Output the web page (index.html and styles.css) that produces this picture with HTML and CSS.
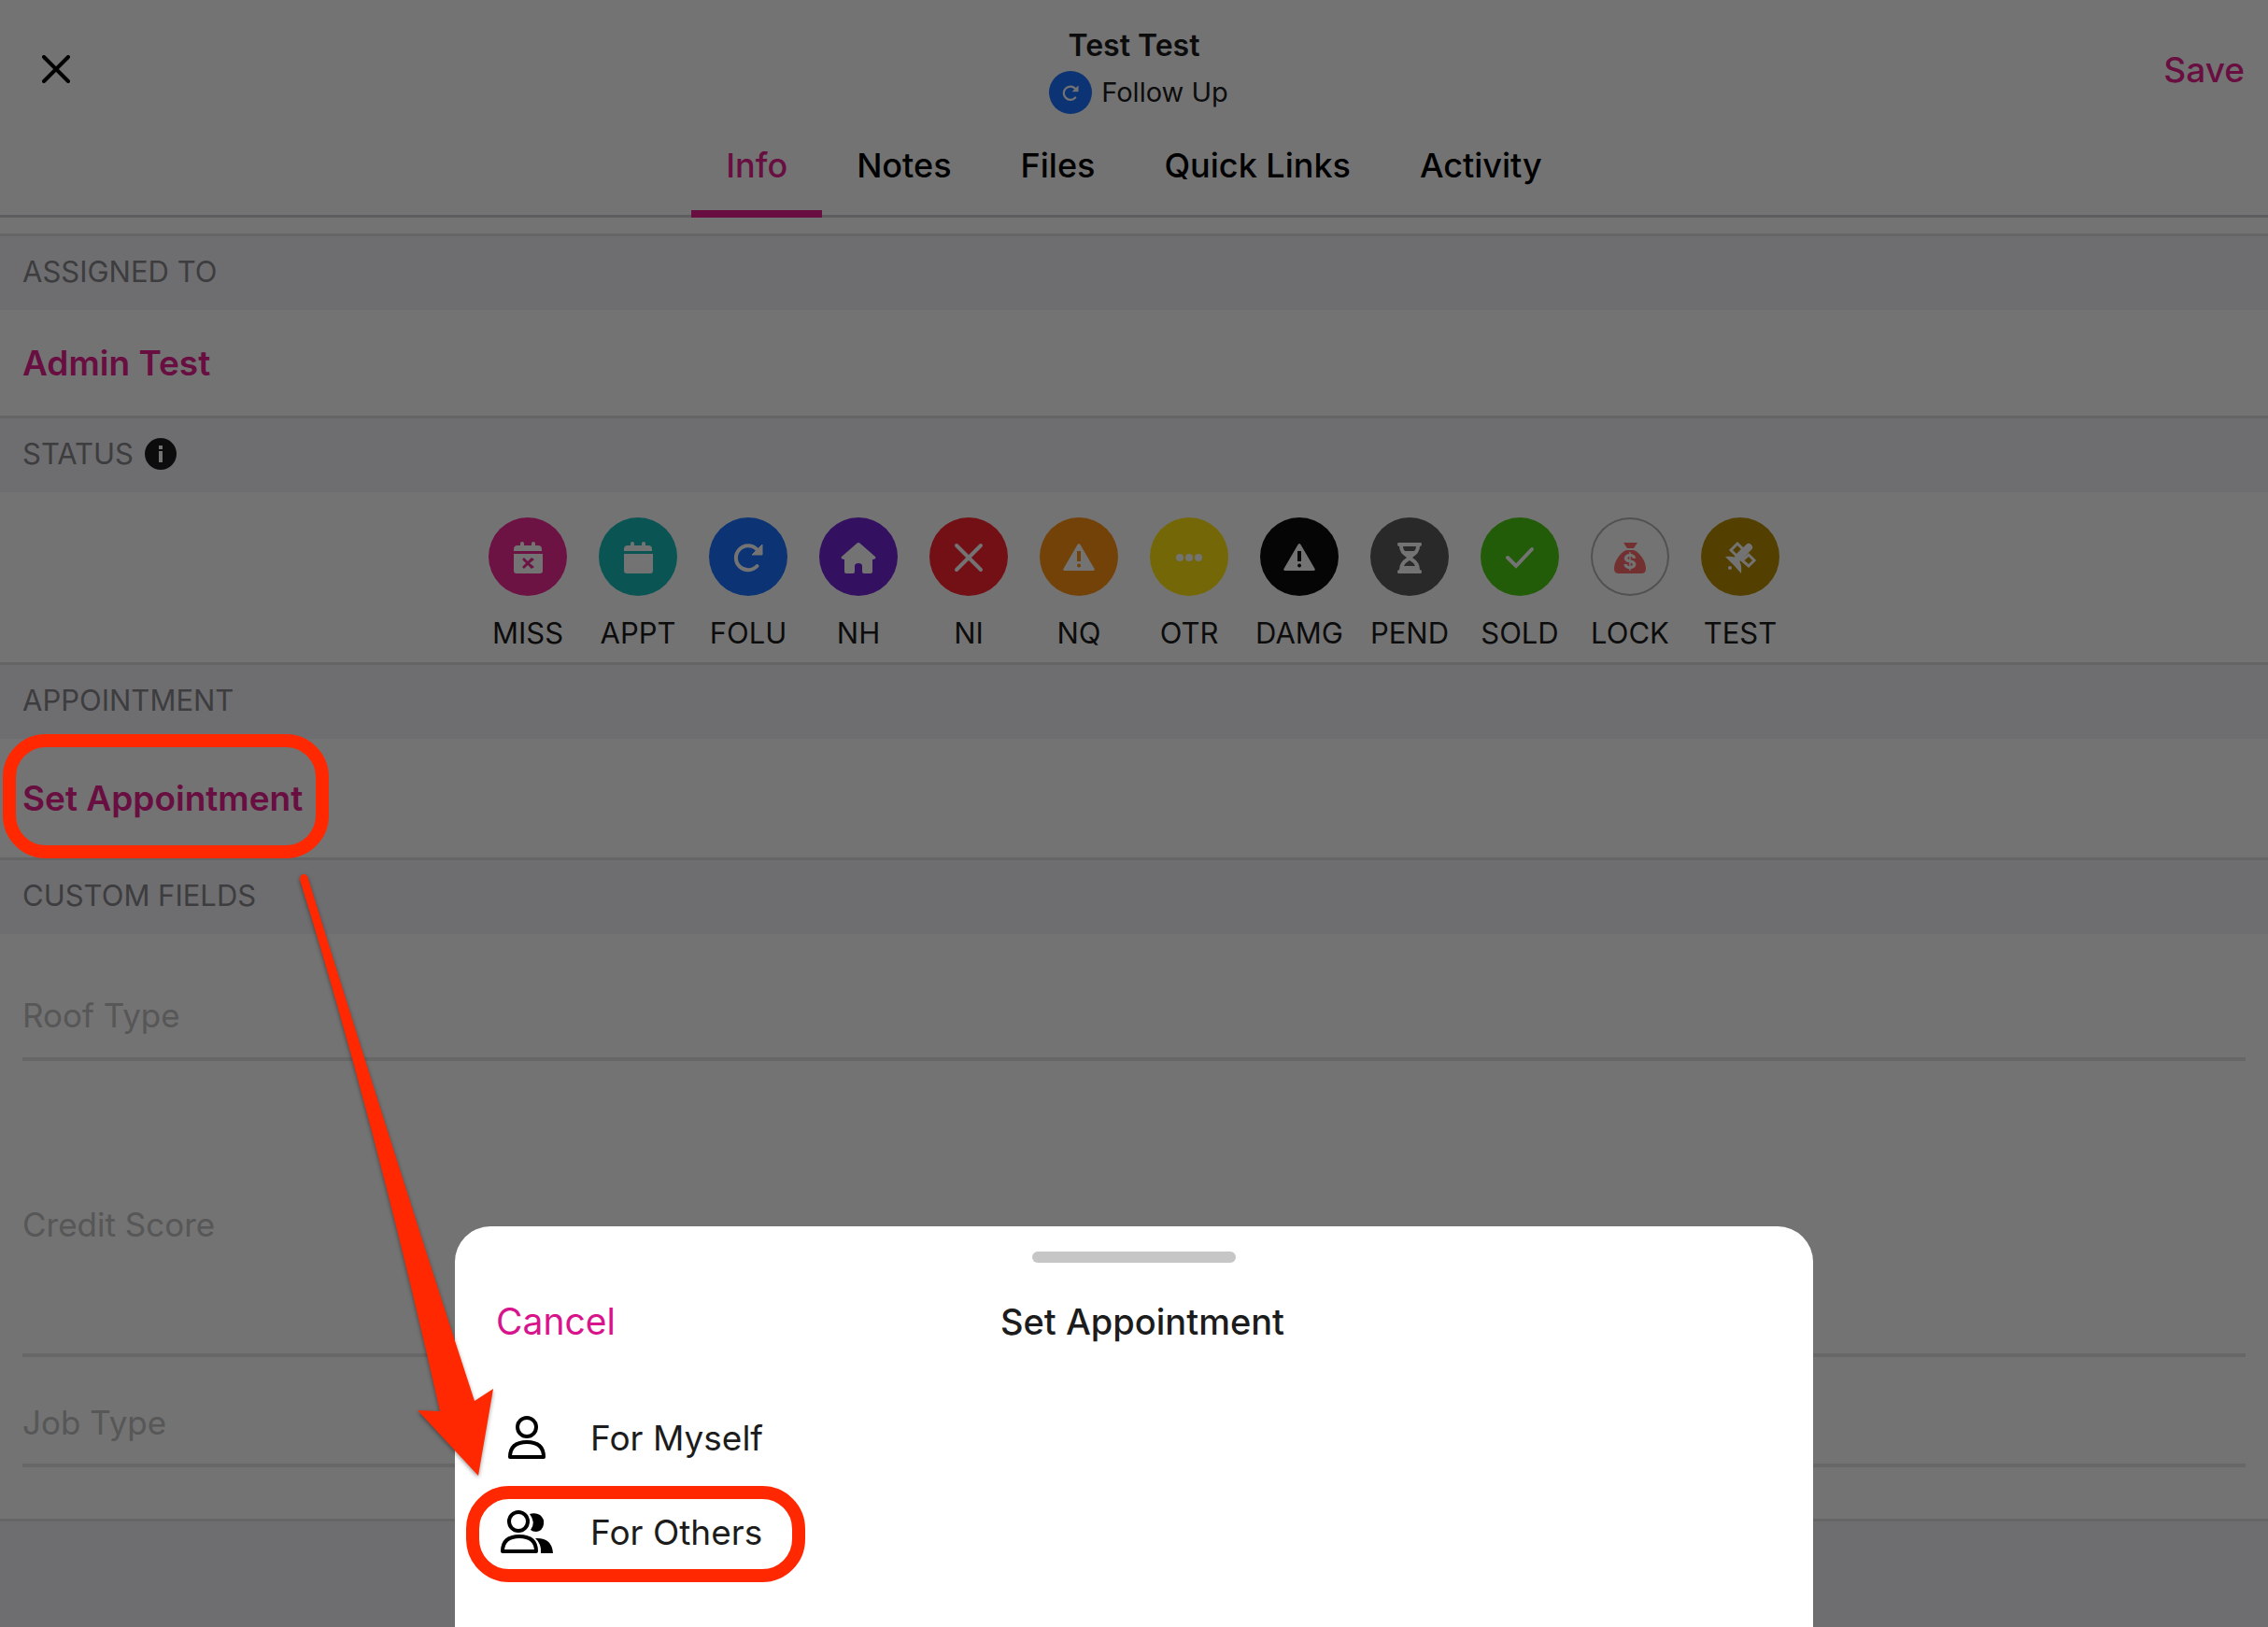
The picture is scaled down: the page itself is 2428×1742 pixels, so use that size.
FILE: index.html
```
<!doctype html>
<html lang="en-US">
  <head>
    <meta charset="utf-8" />
    <meta name="viewport" content="width=device-width, initial-scale=1" />
    <title>Test Test</title>
    <link rel="stylesheet" href="styles.css">
  </head>
  <body>
    <div class="screen">
      <header class="topbar">
        <button class="close" aria-label="Close">
          <svg viewBox="0 0 30 30"><path d="M2 2 28 28M28 2 2 28" /></svg>
        </button>
        <div class="lead">
          <h1>Test Test</h1>
          <div class="lead-status">
            <svg class="dot" viewBox="0 0 84 84"><use href="#icon-redo" /></svg>
            <span>Follow Up</span>
          </div>
        </div>
        <button class="save">Save</button>
      </header>
      <nav class="tabs">
        <a class="tab active" href="#info">Info</a>
        <a class="tab" href="#notes">Notes</a>
        <a class="tab" href="#files">Files</a>
        <a class="tab" href="#links">Quick Links</a>
        <a class="tab" href="#activity">Activity</a>
      </nav>

      <main id="info">
        <h2 class="section">ASSIGNED TO</h2>
        <div class="row assigned"><button class="link">Admin Test</button></div>

        <h2 class="section">STATUS
          <svg class="info" viewBox="0 0 34 34"><circle cx="17" cy="17" r="17" fill="#1c1c1c" /><path d="M15 8h4v4h-4zM15 14h4v12h-4z" fill="#fff" /></svg>
        </h2>
        <div class="row statuses">
          <button class="status"><span class="circle miss"><svg viewBox="0 0 84 84">
            <path d="M27 36v-2q0-4 4-4h3v-2q0-2 2-2t2 2v2h8v-2q0-2 2-2t2 2v2h3q4 0 4 4v2z" />
            <path fill-rule="evenodd" d="M27 39h31v18q0 3-3 3H30q-3 0-3-3zM38 43l-2 2 4 4-4 4 2 2 4-4 4 4 3-2-5-4 5-4-3-2-4 4z" />
          </svg></span>MISS</button>
          <button class="status"><span class="circle appt"><svg viewBox="0 0 84 84">
            <path d="M27 36v-2q0-4 4-4h3v-2q0-2 2-2t2 2v2h8v-2q0-2 2-2t2 2v2h3q4 0 4 4v2z" />
            <path d="M27 39h31v18q0 3-3 3H30q-3 0-3-3z" />
          </svg></span>APPT</button>
          <button class="status"><span class="circle folu"><svg viewBox="0 0 84 84">
            <g id="icon-redo"><path class="line" d="M51 34A13 13 0 1 0 51.500 52" stroke-width="4" /><path d="M57 29V40H46z" stroke="#fff" stroke-linejoin="round" /></g>
          </svg></span>FOLU</button>
          <button class="status"><span class="circle nh"><svg viewBox="0 0 84 84">
            <path d="M42 27q1 0 2 1l16 14q1 1 0 2t-3 1v13q0 2-2 2h-7q-2 0-2-2v-6q0-3-4-3t-4 3v6q0 2-2 2h-7q-2 0-2-2V45q-2 0-3-1t0-2l16-14q1-1 2-1z" />
          </svg></span>NH</button>
          <button class="status"><span class="circle ni"><svg viewBox="0 0 84 84">
            <path class="line" d="M29 30 55 56M55 30 29 56" stroke-width="4" />
          </svg></span>NI</button>
          <button class="status"><span class="circle nq"><svg viewBox="0 0 84 84">
            <path id="icon-warn" fill-rule="evenodd" d="M42 28q1 0 2 2l14 24q2 3-1 3H27q-3 0-1-3l14-24q1-2 2-2zM40 36v11h4V36zM42 49.500a2 2 0 1 0 .1 0z" />
          </svg></span>NQ</button>
          <button class="status"><span class="circle otr"><svg viewBox="0 0 84 84">
            <circle cx="32" cy="43" r="4" /><circle cx="42" cy="43" r="4" /><circle cx="52" cy="43" r="4" />
          </svg></span>OTR</button>
          <button class="status"><span class="circle damg"><svg viewBox="0 0 84 84"><use href="#icon-warn" /></svg></span>DAMG</button>
          <button class="status"><span class="circle pend"><svg viewBox="0 0 84 84">
            <path fill-rule="evenodd" d="M30 27h24q1 0 1 2t-2 2q0 7-8 12 8 5 8 13 2 0 2 2t-1 2H30q-1 0-1-2t2-2q0-8 8-13-8-5-8-12-2 0-2-2t1-2zM35 31q0 3 2 5h10q2-2 2-5zM42 46q-4 2-6 6h12q-2-4-6-6z" />
          </svg></span>PEND</button>
          <button class="status"><span class="circle sold"><svg viewBox="0 0 84 84">
            <path class="line" d="M29 43 38 52 55 34" stroke-width="4" />
          </svg></span>SOLD</button>
          <button class="status"><span class="circle lock"><svg viewBox="0 0 84 84">
            <path d="M35 27h15l-4 6h-7z" />
            <path d="M38 35h8q5 2 9 8 4 6 4 12 0 5-5 5H30q-5 0-5-5 0-6 4-12 4-6 9-8z" />
            <text x="42" y="55" text-anchor="middle">$</text>
          </svg></span>LOCK</button>
          <button class="status"><span class="circle test"><svg viewBox="0 0 84 84">
            <path class="line" d="M39 28 45 34 38 41 32 35zM51 40 57 46 51 52 44 46z" stroke-width="3" />
            <path class="line" d="M51 32 40 43" stroke-width="8" />
            <path d="M26 42q10-1 14 3t3 15l-8-9z" />
            <circle cx="31" cy="54" r="2" />
          </svg></span>TEST</button>
        </div>

        <h2 class="section">APPOINTMENT</h2>
        <div class="row appointment"><button class="link">Set Appointment</button></div>

        <h2 class="section">CUSTOM FIELDS</h2>
        <div class="fields">
          <input class="field roof" type="text" aria-label="Roof Type" placeholder="Roof Type" />
          <textarea class="field credit" rows="1" aria-label="Credit Score" placeholder="Credit Score"></textarea>
          <input class="field job" type="text" aria-label="Job Type" placeholder="Job Type" />
        </div>
        <div class="footer"></div>
      </main>

      <div class="backdrop"></div>

      <div class="sheet" role="dialog" aria-labelledby="sheet-title">
        <div class="handle"></div>
        <div class="sheet-head">
          <button class="cancel">Cancel</button>
          <h2 class="sheet-title" id="sheet-title">Set Appointment</h2>
        </div>
        <button class="option">
          <svg viewBox="0 0 60 50"><circle cx="31" cy="13" r="10" /><path d="M13 45q0-16 18-16t18 16z" /></svg>
          For Myself
        </button>
        <button class="option">
          <svg viewBox="0 0 60 50">
            <circle cx="22" cy="13" r="10" /><path d="M5 45q0-16 18-16t18 16z" />
            <path class="solid" d="M34 5q6-2 11 1 5 4 4 10-1 7-8 8-4 0-6-2 6-8-1-17zM40 31q18-1 19 16H46q1-10-6-16z" />
          </svg>
          For Others
        </button>
      </div>

      <!-- walkthrough marks -->
      <div class="ring ring-set"></div>
      <div class="ring ring-others"></div>
      <svg class="arrow" viewBox="0 0 240 660">
        <path d="M21 22q0-6 4-6t5 5Q125 326 208 580l20-13-16 93-65-70 24 1Q100 276 21 22z" />
      </svg>
    </div>
  </body>
</html>
```
FILE: styles.css
```
* { box-sizing: border-box; }
body {
  margin: 0;
  font-family: Inter, "Liberation Sans", sans-serif;
  color: #1c1c1c;
  background-color: #fff;
}
h1, h2 { margin: 0; font-weight: 400; }
button {
  padding: 0;
  border: 0;
  background: none;
  font: inherit;
  color: inherit;
  cursor: pointer;
}
.screen {
  position: relative;
  display: flex;
  flex-direction: column;
  min-height: 100vh;
  overflow: hidden;
}

/* Header */
.topbar {
  display: grid;
  grid-template-columns: 1fr auto 1fr;
  align-items: center;
  padding: 26px 25px 0;
}
.close { justify-self: start; margin-left: 20px; line-height: 0; }
.close svg { width: 30px; height: 30px; }
.close path { stroke: #000; stroke-width: 4; stroke-linecap: round; }
.lead { display: flex; flex-direction: column; align-items: center; }
.lead h1 { font-size: 32px; line-height: 46px; font-weight: 600; }
.lead-status {
  display: flex;
  align-items: center;
  gap: 10px;
  margin: 4px 0 0 10px;
  font-size: 29px;
  line-height: 46px;
}
.dot { width: 46px; height: 46px; border-radius: 50%; background-color: #1b71ff; fill: #fff; }
.save { justify-self: end; font-size: 37px; font-weight: 500; color: #e8208f; }
.tabs {
  display: flex;
  justify-content: center;
  border-bottom: 3px solid #d0d0d8;
}
.tab {
  padding: 30px 37px 23px;
  margin-bottom: -3px;
  border-bottom: 8px solid transparent;
  font-size: 36px;
  line-height: 50px;
  font-weight: 500;
  color: #000;
  text-decoration: none;
}
.tab.active { color: #e8208f; border-color: #e8208f; }

/* Sections */
main { display: flex; flex-direction: column; flex: 1; padding-top: 17px; }
.section {
  display: flex;
  align-items: center;
  gap: 12px;
  padding: 0 24px 3px;
  border-top: 3px solid #e0e0e2;
  background-color: #f4f4f8;
  font-size: 31px;
  line-height: 76px;
  color: #88888c;
}
.info { width: 34px; height: 34px; }
.row { display: flex; align-items: center; padding: 0 24px; }
.assigned { height: 113px; }
.appointment { height: 127px; }
.link { font-size: 37px; line-height: 44px; font-weight: 600; color: #e8208f; }
.statuses { justify-content: center; padding: 27px 24px 13px; }
.status {
  display: flex;
  flex-direction: column;
  align-items: center;
  gap: 21px;
  width: 118px;
  font-size: 31px;
  line-height: 37px;
}
.circle { width: 84px; height: 84px; border-radius: 50%; }
.circle svg { display: block; fill: #fff; }
.line { fill: none; stroke: #fff; stroke-linecap: round; }
.miss { background-color: #f02c98; }
.appt { background-color: #18bdb8; }
.folu { background-color: #1b71ff; }
.nh { background-color: #7126d5; }
.ni { background-color: #ff2431; }
.nq { background-color: #ff9312; }
.otr { background-color: #ffe512; }
.damg { background-color: #0d0d0d; }
.pend { background-color: #5b5b5b; }
.sold { background-color: #4ecc14; }
.lock { box-shadow: inset 0 0 0 2px #b4b4b8; }
.lock svg { fill: #ff6c6e; }
.lock text { font-size: 22px; font-weight: 700; fill: #fff; }
.test { background-color: #b98e00; }

/* Custom fields */
.fields { display: flex; flex-direction: column; padding: 0 24px 55px; }
.field {
  width: 100%;
  border: 0;
  border-bottom: 4px solid #e4e4e4;
  background: none;
  font: inherit;
  font-size: 35px;
  line-height: 44px;
  resize: none;
}
.field::placeholder { color: #c0c0c0; opacity: 1; }
.roof { height: 136px; padding: 65px 0 23px; }
.credit { height: 317px; padding: 153px 0 116px; }
.job { height: 118px; padding: 48px 0 22px; }
.footer { flex: 1; min-height: 80px; border-top: 3px solid #e0e0e2; background-color: #f4f4f8; }

/* Bottom sheet */
.backdrop { position: absolute; inset: 0; background-color: rgba(0, 0, 0, 0.55); }
.sheet {
  position: absolute;
  bottom: 0;
  left: 0;
  right: 0;
  width: 100%;
  max-width: 1454px;
  margin: 0 auto;
  padding: 27px 0 51px;
  border-radius: 38px 38px 0 0;
  background-color: #fff;
}
.handle { width: 218px; height: 12px; margin: 0 auto; border-radius: 6px; background-color: #c6c6c6; }
.sheet-head {
  display: grid;
  grid-template-columns: 1fr auto 1fr;
  align-items: center;
  padding: 38px 26px 49px 44px;
  line-height: 50px;
}
.cancel { justify-self: start; font-size: 39px; color: #d8148c; }
.sheet-title { font-size: 38px; font-weight: 500; }
.option {
  display: flex;
  align-items: center;
  gap: 39px;
  height: 101px;
  margin-left: 46px;
  font-size: 37px;
}
.option svg { width: 60px; height: 50px; fill: none; stroke: #000; stroke-width: 4; stroke-linejoin: round; }
.option .solid { fill: #000; stroke: none; }

/* Walkthrough marks */
.ring { position: absolute; border: 14px solid #ff2800; border-radius: 46px; }
.ring-set { left: 3px; top: 786px; width: 349px; height: 133px; }
.ring-others { left: 499px; top: 1591px; width: 363px; height: 103px; }
.arrow {
  position: absolute;
  left: 300px;
  top: 920px;
  width: 240px;
  height: 660px;
  fill: #ff2800;
  filter: drop-shadow(0 2px 2px rgba(0, 0, 0, 0.4));
}
```
